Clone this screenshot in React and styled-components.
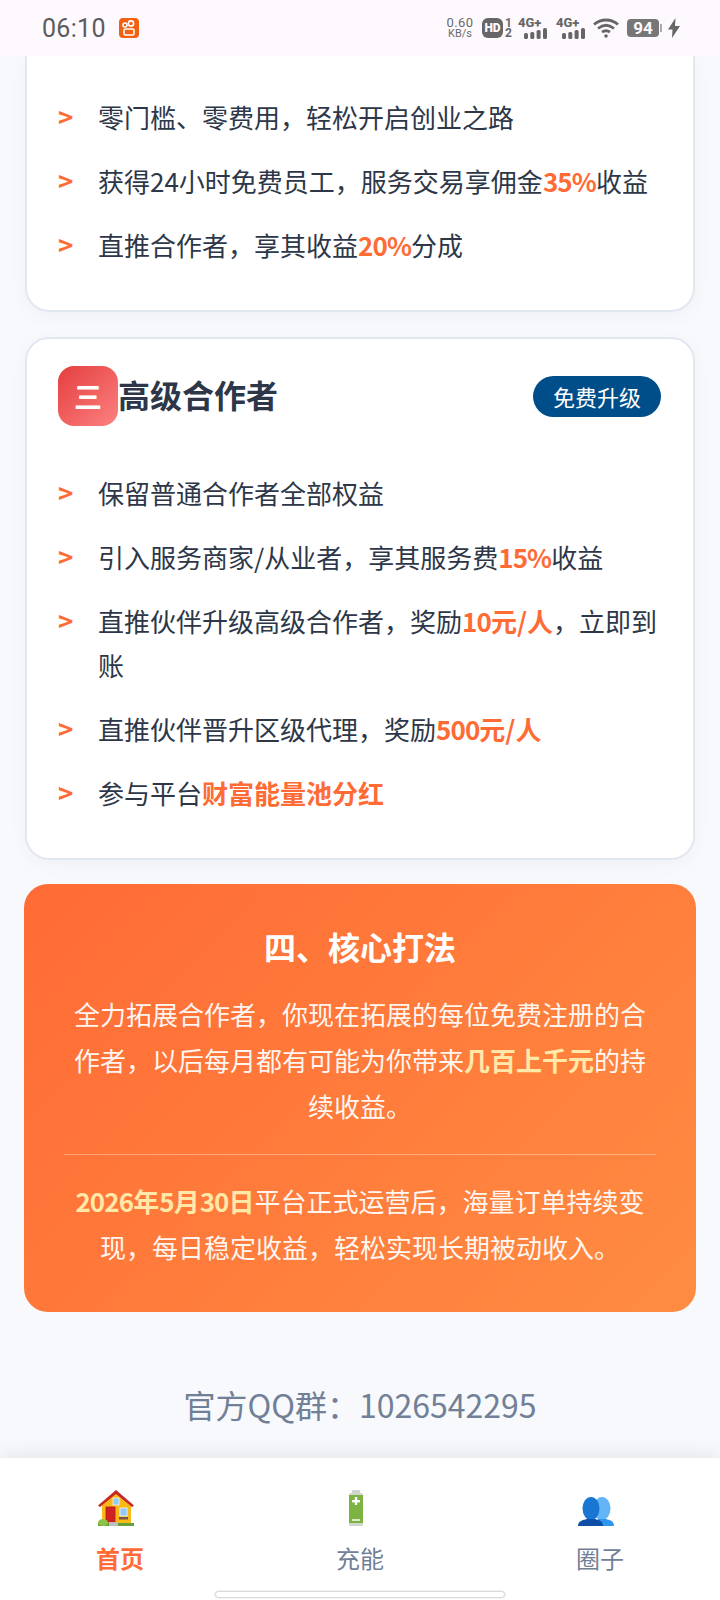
import styled, { createGlobalStyle } from "styled-components";

const GlobalStyle = createGlobalStyle`
  * { box-sizing: border-box; }
  html, body { margin: 0; padding: 0; }
  body {
    background: #f7f9fc;
    font-family: "Noto Sans CJK SC", sans-serif;
  }
`;

const Phone = styled.div`
  width: 720px;
  height: 1600px;
  display: flex;
  flex-direction: column;
  overflow: hidden;
  position: relative;
  background: #f7f9fc;
`;

/* status bar */
const StatusBar = styled.div`
  height: 56px;
  flex: none;
  background: #fef9fe;
  display: flex;
  align-items: center;
  padding: 0 40px 0 42px;
  color: #666;
  font-family: Roboto, sans-serif;
`;
const Time = styled.span`
  width: 62px;
  font-size: 25px;
  letter-spacing: 0.3px;
  color: #5c5c5c;
`;
const AppBadge = styled.svg`
  width: 20px;
  height: 20px;
  margin-left: 15px;
`;
const StatusIcons = styled.div`
  margin-left: auto;
  display: flex;
  align-items: center;
`;
const Speed = styled.div`
  width: 28px;
  display: flex;
  flex-direction: column;
  align-items: center;
  font-size: 13px;
  line-height: 11px;
  letter-spacing: 0.4px;
  color: #6a6a6a;
  small { font-size: 11px; letter-spacing: 0; }
`;
const Hd = styled.span`
  margin-left: 8px;
  width: 21px;
  height: 20px;
  border-radius: 6px;
  background: #666;
  color: #fef9fe;
  font-size: 12px;
  font-weight: 900;
  display: flex;
  align-items: center;
  justify-content: center;
`;
const SimNumbers = styled.span`
  margin-left: 2px;
  width: 8px;
  display: flex;
  flex-direction: column;
  font-size: 12px;
  font-weight: 700;
  line-height: 10.5px;
  color: #666;
`;
const Signal = styled.div`
  margin-left: ${(p) => p.$gap}px;
  width: 29px;
  display: flex;
  flex-direction: column;
  align-items: flex-start;
  color: #666;
  span { font-size: 13px; font-weight: 800; line-height: 10px; }
  svg { display: block; margin: 0 0 0 6px; }
`;
const WifiIcon = styled.svg`
  margin-left: 8px;
`;
const Battery = styled.span`
  margin-left: 8px;
  width: 32px;
  height: 18px;
  border-radius: 4px;
  background: #777;
  color: #fef9fe;
  font-size: 17px;
  font-weight: 700;
  display: flex;
  align-items: center;
  justify-content: center;
  position: relative;
  &::after {
    content: "";
    position: absolute;
    right: -3px;
    top: 5px;
    width: 2px;
    height: 8px;
    background: #aaa;
  }
`;
const BoltIcon = styled.svg`
  margin-left: 9px;
`;

/* page content */
const Content = styled.main`
  flex: 1;
  min-height: 0;
  overflow: hidden;
  padding: 0 25px;
  display: flex;
  flex-direction: column;
`;
const Card = styled.section`
  flex: none;
  background: #fff;
  border: 2px solid #e2e8f0;
  border-radius: ${(p) => (p.$clipped ? "0 0 24px 24px" : "24px")};
  border-top-width: ${(p) => (p.$clipped ? 0 : 2)}px;
  box-shadow: 0 4px 20px rgba(0, 0, 0, 0.04);
  padding: ${(p) => (p.$clipped ? "39px" : "27px")} 31px 23px;
  margin-bottom: ${(p) => (p.$clipped ? 25 : 24)}px;
`;
const CardHeader = styled.header`
  display: flex;
  align-items: center;
  margin-bottom: 45px;
`;
const NumberIcon = styled.span`
  width: 60px;
  height: 60px;
  border-radius: 16px;
  background: linear-gradient(135deg, #e53e3e, #fc8181);
  color: #fff;
  font-size: 28px;
  font-weight: 700;
  display: flex;
  align-items: center;
  justify-content: center;
`;
const CardTitle = styled.h2`
  margin: 0;
  padding-bottom: 4px;
  font-size: 32px;
  font-weight: 700;
  color: #2d3748;
`;
const UpgradeBadge = styled.span`
  margin-left: auto;
  margin-right: 1px;
  height: 41px;
  padding: 0 20px;
  border-radius: 21px;
  background: #004e89;
  color: #fff;
  font-size: 22px;
  display: flex;
  align-items: center;
`;
const List = styled.ul`
  list-style: none;
  margin: 0;
  padding: 0;
`;
const Item = styled.li`
  display: flex;
  font-size: 26px;
  line-height: 44px;
  color: #2d3748;
  margin-bottom: 20px;
  &::before {
    content: ">";
    flex: none;
    width: 40px;
    color: #ff6b35;
    font-weight: 700;
    font-size: 26px;
    line-height: 42px;
  }
`;
const Hot = styled.strong`
  color: #ff6b35;
  font-weight: 700;
`;
/* bold latin runs sit a little tighter than the CJK around them */
const Tight = styled.span`
  letter-spacing: -0.9px;
`;
const CoreCard = styled.section`
  margin: 0 -1px;
  flex: none;
  border-radius: 24px;
  padding: 38px 40px 42px;
  background: linear-gradient(135deg, #ff6b35, #ff8c42);
  color: #fff;
  text-align: center;
`;
const CoreTitle = styled.h2`
  margin: 0 0 21px;
  font-size: 32px;
  line-height: 48px;
  font-weight: 700;
`;
const CoreText = styled.p`
  margin: 0;
  font-size: 26px;
  line-height: 46px;
  color: rgba(255, 255, 255, 0.95);
`;
const Gold = styled.strong`
  color: #ffe8a8;
  font-weight: 700;
`;
const Divider = styled.hr`
  border: 0;
  height: 1px;
  background: rgba(255, 255, 255, 0.35);
  margin: 25px 0 23px;
`;
const QQ = styled.p`
  margin: 68px 0 0;
  text-align: center;
  font-size: 32px;
  line-height: 48px;
  color: #718096;
`;

/* bottom nav */
const Nav = styled.nav`
  height: 142px;
  flex: none;
  background: #fff;
  display: flex;
  box-shadow: 0 -4px 20px rgba(0, 0, 0, 0.08);
  position: relative;
`;
const NavItem = styled.div`
  flex: 1;
  display: flex;
  flex-direction: column;
  align-items: center;
  padding-top: 32px;
  font-size: 24px;
  line-height: 36px;
  color: ${(p) => (p.$active ? "#ff6b35" : "#718096")};
  font-weight: ${(p) => (p.$active ? 700 : 400)};
  svg { display: block; margin: 0 8px 14px 0; }
`;
const HomeBar = styled.div`
  position: absolute;
  left: 215px;
  bottom: 2px;
  width: 290px;
  height: 7px;
  border-radius: 4px;
  background: #fff;
  border: 1px solid #d8d8d8;
  box-shadow: 0 0 2px rgba(0, 0, 0, 0.15);
`;

const Bars = () => (
  <svg width="23" height="11" viewBox="0 0 23 11" fill="#666">
    <rect x="0" y="5" width="4" height="6" rx="1.6" />
    <rect x="6.3" y="4" width="4" height="7" rx="1.6" />
    <rect x="12.6" y="2" width="4" height="9" rx="1.6" />
    <rect x="19" y="0" width="4" height="11" rx="1.6" />
  </svg>
);

const HouseIcon = () => (
  <svg width="36" height="36" viewBox="0 0 36 36">
    <path d="M18 2 L4 15 V33 H33 V15 Z" fill="#fbb917" />
    <path d="M0 15.5 L18 0 L36 15.5 L34 17 L18 4 L2 17 Z" fill="#c62828" />
    <rect x="15" y="8" width="6" height="7" fill="#90caf9" stroke="#f5f5f5" strokeWidth="0.8" />
    <rect x="8" y="17" width="9" height="15" fill="#d32020" stroke="#a81c1c" strokeWidth="0.8" />
    <rect x="22" y="18" width="7" height="8" fill="#90caf9" stroke="#f5f5f5" strokeWidth="0.8" />
    <rect x="21" y="27" width="9" height="2.5" fill="#795548" />
    <rect x="0" y="33" width="36" height="3" fill="#689f38" />
    <ellipse cx="5" cy="32.5" rx="5" ry="3.5" fill="#8bc34a" />
    <rect x="11" y="32" width="9" height="4" fill="#bdbdbd" />
  </svg>
);

const BatteryIcon = () => (
  <svg width="36" height="36" viewBox="0 0 36 36">
    <rect x="14" y="0" width="8" height="5" rx="1" fill="#cfd3cc" />
    <rect x="11" y="3" width="14" height="33" rx="2" fill="#d0d4cc" />
    <rect x="11" y="5" width="14" height="28" fill="#7cb342" />
    <rect x="14" y="10" width="8" height="2.4" fill="#fff" />
    <rect x="16.8" y="7" width="2.4" height="8" fill="#fff" />
    <rect x="14" y="29" width="8" height="2" fill="#dcedc8" />
  </svg>
);

const BustsIcon = () => (
  <svg width="36" height="36" viewBox="0 0 36 36">
    <ellipse cx="24" cy="18.5" rx="8.5" ry="11.5" fill="#64b5f6" />
    <path d="M20 29 H28 C32 30 36 31 36 36 H20 Z" fill="#2f96ed" />
    <ellipse cx="13" cy="18.5" rx="8.5" ry="11.5" fill="#1976d2" />
    <path d="M0 36 C0 31 5 30 9 29 H17 C21 30 25 31 25 36 Z" fill="#0d4ea6" />
  </svg>
);

export default function App() {
  return (
    <Phone>
      <GlobalStyle />
      <StatusBar>
        <Time>06:10</Time>
        <AppBadge viewBox="0 0 20 20">
          <rect width="20" height="20" rx="4" fill="#f2610f" />
          <circle cx="12" cy="5.5" r="2.6" fill="none" stroke="#fff" strokeWidth="1.6" />
          <circle cx="6" cy="7" r="2" fill="none" stroke="#fff" strokeWidth="1.6" />
          <rect x="5" y="11" width="10" height="6" rx="1.5" fill="none" stroke="#fff" strokeWidth="1.6" />
        </AppBadge>
        <StatusIcons>
          <Speed>
            0.60
            <small>KB/s</small>
          </Speed>
          <Hd>HD</Hd>
          <SimNumbers>
            <span>1</span>
            <span>2</span>
          </SimNumbers>
          <Signal $gap={5}>
            <span>4G+</span>
            <Bars />
          </Signal>
          <Signal $gap={9}>
            <span>4G+</span>
            <Bars />
          </Signal>
          <WifiIcon width="26" height="20" viewBox="0 0 26 20" fill="none" stroke="#666" strokeWidth="2.8">
            <path d="M1 6.5 C8 0.5 18 0.5 25 6.5" />
            <path d="M5 10.5 C10 6.5 16 6.5 21 10.5" />
            <path d="M9 14 C11.5 12.4 14.5 12.4 17 14" />
            <circle cx="13" cy="18" r="1.8" fill="#666" stroke="none" />
          </WifiIcon>
          <Battery>94</Battery>
          <BoltIcon width="12" height="20" viewBox="0 0 12 20" fill="#666">
            <path d="M7.5 0 L0 11.5 H4.5 L4 20 L12 8 H7 Z" />
          </BoltIcon>
        </StatusIcons>
      </StatusBar>

      <Content>
        <Card $clipped>
          <List>
            <Item>零门槛、零费用，轻松开启创业之路</Item>
            <Item>
              <span>获得24小时免费员工，服务交易享佣金<Hot><Tight>35%</Tight></Hot>收益</span>
            </Item>
            <Item>
              <span>直推合作者，享其收益<Hot><Tight>20%</Tight></Hot>分成</span>
            </Item>
          </List>
        </Card>

        <Card>
          <CardHeader>
            <NumberIcon>三</NumberIcon>
            <CardTitle>高级合作者</CardTitle>
            <UpgradeBadge>免费升级</UpgradeBadge>
          </CardHeader>
          <List>
            <Item>保留普通合作者全部权益</Item>
            <Item>
              <span>引入服务商家/从业者，享其服务费<Hot><Tight>15%</Tight></Hot>收益</span>
            </Item>
            <Item>
              <span>直推伙伴升级高级合作者，奖励<Hot><Tight>10</Tight>元/人</Hot>，立即到账</span>
            </Item>
            <Item>
              <span>直推伙伴晋升区级代理，奖励<Hot><Tight>500</Tight>元/人</Hot></span>
            </Item>
            <Item>
              <span>参与平台<Hot>财富能量池分红</Hot></span>
            </Item>
          </List>
        </Card>

        <CoreCard>
          <CoreTitle>四、核心打法</CoreTitle>
          <CoreText>
            全力拓展合作者，你现在拓展的每位免费注册的合作者，以后每月都有可能为你带来<Gold>几百上千元</Gold>的持续收益。
          </CoreText>
          <Divider />
          <CoreText>
            <Gold><Tight>2026</Tight>年<Tight>5</Tight>月<Tight>30</Tight>日</Gold>平台正式运营后，海量订单持续变现，每日稳定收益，轻松实现长期被动收入。
          </CoreText>
        </CoreCard>

        <QQ>官方QQ群：1026542295</QQ>
      </Content>

      <Nav>
        <NavItem $active>
          <HouseIcon />
          首页
        </NavItem>
        <NavItem>
          <BatteryIcon />
          充能
        </NavItem>
        <NavItem>
          <BustsIcon />
          圈子
        </NavItem>
        <HomeBar />
      </Nav>
    </Phone>
  );
}
